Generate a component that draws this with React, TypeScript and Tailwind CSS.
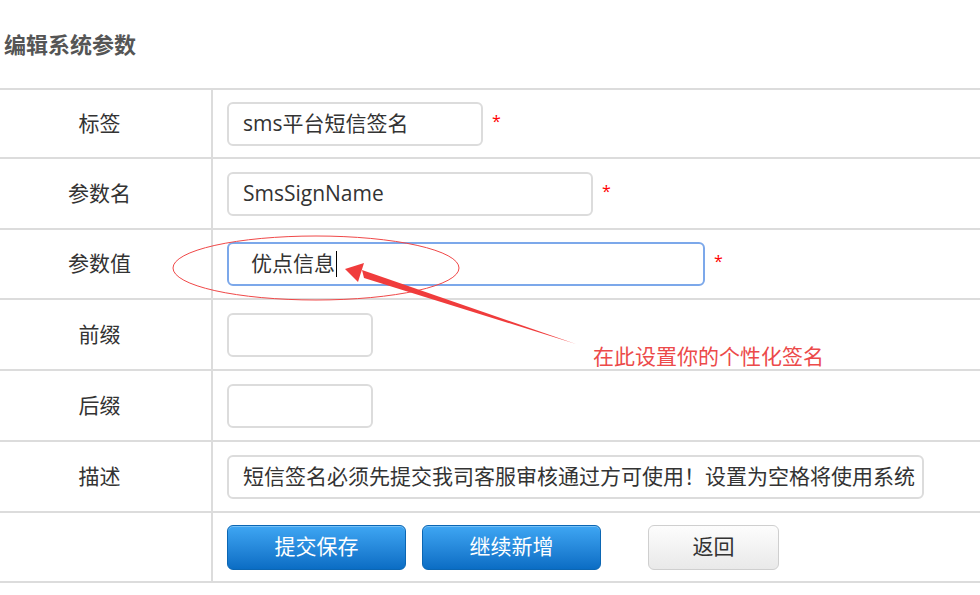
import React from 'react';

const font = "font-['Open_Sans','Noto_Sans_CJK_SC',sans-serif]";

type Row = {
  label: string;
  value?: string;
  width: string;
  height: string;
  required?: boolean;
  focused?: boolean;
};

const rows: Row[] = [
  { label: "标签", value: "sms平台短信签名", width: "w-[256px]", height: "h-[69px]", required: true },
  { label: "参数名", value: "SmsSignName", width: "w-[366px]", height: "h-[71px]", required: true },
  { label: "参数值", value: "优点信息", width: "w-[478px]", height: "h-[70px]", required: true, focused: true },
  { label: "前缀", width: "w-[146px]", height: "h-[71px]" },
  { label: "后缀", width: "w-[146px]", height: "h-[71px]" },
  { label: "描述", value: "短信签名必须先提交我司客服审核通过方可使用！设置为空格将使用系统", width: "w-[697px]", height: "h-[71px]" },
];

const Field: React.FC<{ row: Row }> = ({ row }) => (
  <div className="flex items-center">
    <div
      className={`${row.width} h-[44px] rounded-[6px] border-2 bg-white flex items-center overflow-hidden whitespace-nowrap text-[21px] text-[#333] ${
        row.focused ? "border-[#7ca8ea] pl-[22px]" : "border-[#dcdcdc] pl-[14px]"
      }`}
    >
      {row.value}
      {row.focused && <span className="inline-block w-px h-[26px] bg-black ml-px"></span>}
    </div>
    {row.required && <span className="ml-[9px] -mt-[6px] text-[#f00] text-[16px]">*</span>}
  </div>
);

export default function App() {
  return (
    <div className={`relative w-[980px] h-[595px] bg-white overflow-hidden ${font}`}>
      <h1 className="h-[88px] flex items-center pl-[4px] text-[22px] font-bold text-[#555]">编辑系统参数</h1>

      <div className="border-t-2 border-[#dcdcdc]">
        {rows.map((row, i) => (
          <div key={i} className={`flex ${row.height} border-b-2 border-[#dcdcdc]`}>
            <div className="w-[213px] border-r-2 border-[#dcdcdc] flex items-center justify-center pr-[12px] text-[21px] text-[#333]">
              {row.label}
            </div>
            <div className="flex-1 flex items-center pl-[14px]">
              <Field row={row} />
            </div>
          </div>
        ))}

        <div className="flex h-[70px] border-b-2 border-[#dcdcdc]">
          <div className="w-[213px] border-r-2 border-[#dcdcdc]"></div>
          <div className="flex-1 flex items-center pl-[14px]">
            <button className="w-[179px] h-[45px] rounded-[6px] border border-[#0b66b3] bg-gradient-to-b from-[#3ea6f3] to-[#0a6dc4] text-white text-[21px] shadow-[inset_0_1px_0_rgba(255,255,255,0.3)]">
              提交保存
            </button>
            <button className="ml-[16px] w-[179px] h-[45px] rounded-[6px] border border-[#0b66b3] bg-gradient-to-b from-[#3ea6f3] to-[#0a6dc4] text-white text-[21px] shadow-[inset_0_1px_0_rgba(255,255,255,0.3)]">
              继续新增
            </button>
            <button className="ml-[47px] w-[131px] h-[45px] rounded-[6px] border border-[#cfcfcf] bg-gradient-to-b from-[#fdfdfd] to-[#e9e9e9] text-[#333] text-[21px]">
              返回
            </button>
          </div>
        </div>
      </div>

      {/* annotation overlay */}
      <svg className="absolute left-0 top-0 pointer-events-none" width="980" height="595">
        <ellipse cx="316" cy="268" rx="143" ry="32" fill="none" stroke="#f04848" strokeWidth="1" />
        <polygon points="362,270 364,278 576,344" fill="#f03c3c" />
        <polygon points="345,269 364,263 358,282" fill="#f03c3c" />
      </svg>
      <div className="absolute left-[593px] top-[342px] text-[21px] leading-[28px] text-[#ec4a4a]">
        在此设置你的个性化签名
      </div>
    </div>
  );
}
